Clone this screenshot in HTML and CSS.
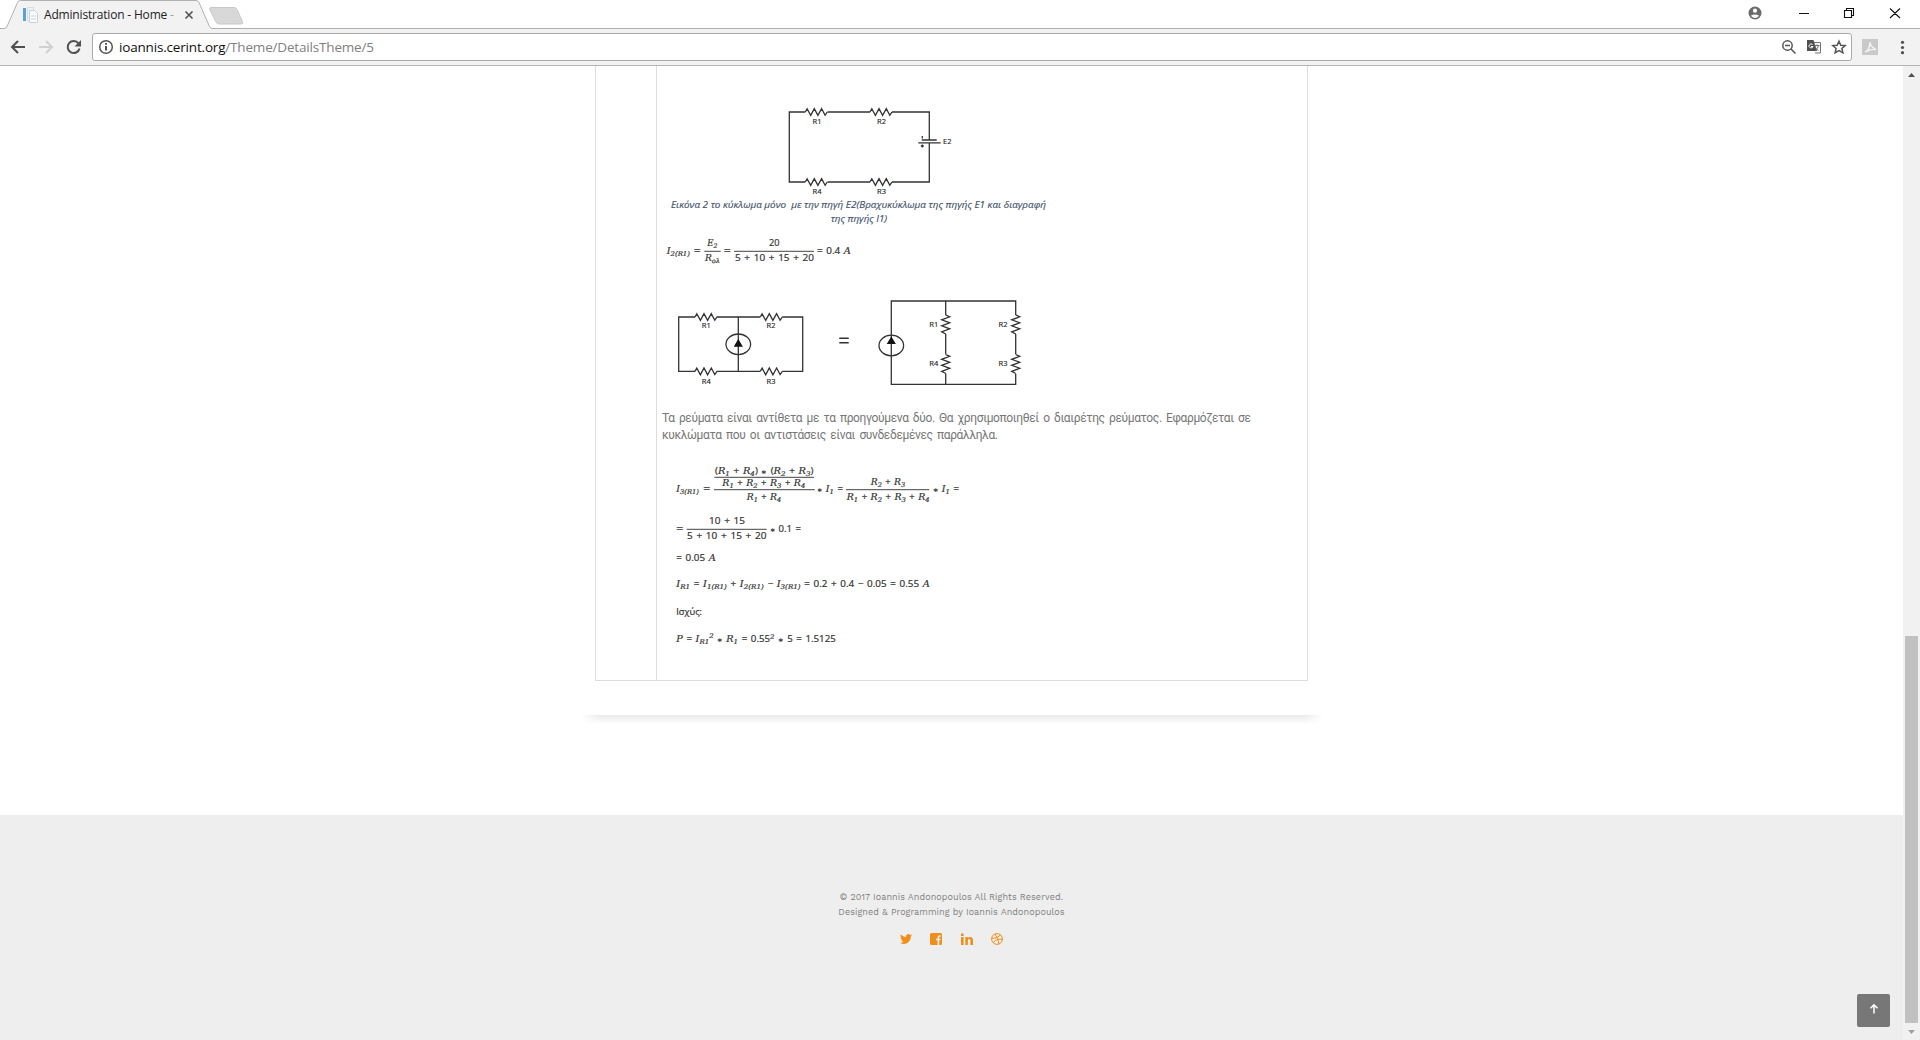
FILE: index.html
```html
<!DOCTYPE html>
<html lang="el">
<head>
<meta charset="utf-8">
<title>Administration - Home</title>
<link rel="stylesheet" href="styles.css">
</head>
<body>
<svg class="defs" width="0" height="0">
  <defs>
    <path id="res" d="M0 0l1.8-3.2 3.6 6.6 3.6-6.8 3.6 6.8 3.7-6.8 3.5 6.6 2.2-3.2"/>
    <path id="resv" d="M0 0l4 1.8-8 3 8 3-8 3 8 3-8 3 4 2.2"/>
  </defs>
</svg>
<header class="tabs">
  <svg class="tabart" width="250" height="29" viewBox="0 0 250 29">
    <path d="M0 28.5h4.500Q6 28.500 7 26.500L17.500 2.500Q18.500.5 20.500.5H196q2 0 3 2L209.500 26.500q1 2 3 2H250V29H0z" fill="#f2f2f2"/>
    <path d="M0 28.500h4.500Q6 28.500 7 26.500L17.500 2.500Q18.500.5 20.500.5H196q2 0 3 2L209.500 26.500q1 2 3 2H250" fill="none" stroke="#b0b0b0"/>
    <path d="M211 7.500h23q2 0 3 2l5.500 12q1 2.500-1.500 2.500h-22q-2 0-3-2l-6-12q-1-2.500 1-2.500z" fill="#d8d8d8" stroke="#c8c8c8"/>
    <path d="M23 8h3v13h-3z" fill="#5ba3d3"/><path d="M27.500 7.500h6v13h-6z" fill="#eef3f7" stroke="#d3dde4"/><path d="M29.500 10.500h5l3 3v9h-8z" fill="#f8fafb" stroke="#c8d2da"/><path d="M31 16h5M31 19h5" stroke="#cbd5dc"/>
    <path d="M185.500 11.500l7 7m0-7l-7 7" stroke="#555" stroke-width="1.700"/>
  </svg>
  <span class="tabtitle">Administration - Home <i>-</i></span>
  <svg class="winbtns" width="175" height="28" viewBox="1745 0 175 28">
    <circle cx="1755" cy="13" r="6.500" fill="#6a6a6a"/><circle cx="1755" cy="10.700" r="2.100" fill="#fff"/><path d="M1750.800 15.800q4.200-2.800 8.400 0-4.200 4.400-8.400 0" fill="#fff"/>
    <path d="M1799 13.500h10M1844.500 10.500h7v7h-7zM1846.500 10.500v-2h7v7h-2M1890 8.500l10 9.500m0-9.500l-10 9.500" fill="none" stroke="#111" stroke-width="1.100"/>
  </svg>
</header>
<nav class="toolbar">
  <svg class="navicons" width="92" height="36" viewBox="0 29 92 36">
    <path d="M25 47H12.500m5.500-6l-6 6 6 6" fill="none" stroke="#505050" stroke-width="2"/>
    <path d="M39 47h12.500m-5.500-6l6 6-6 6" fill="none" stroke="#d0d0d0" stroke-width="2"/>
    <path d="M78.500 43.500a6 6 0 1 0 1 5" fill="none" stroke="#505050" stroke-width="2"/><path d="M81 40v6.500h-6.500z" fill="#505050"/>
  </svg>
  <div class="omnibox">
    <svg width="22" height="26" viewBox="95 34 22 26"><circle cx="106" cy="47" r="6.300" fill="none" stroke="#555" stroke-width="1.500"/><path d="M106 46v4.500M106 43v1.700" stroke="#444" stroke-width="1.800"/></svg>
    <span class="url">ioannis.cerint.org<i>/Theme/DetailsTheme/5</i></span>
    <svg class="boxicons" width="75" height="26" viewBox="1775 34 75 26">
      <g fill="none" stroke="#555" stroke-width="1.500"><circle cx="1786.500" cy="45.500" r="4.700"/><path d="M1790 49l4.500 4.500M1784 45.500h5"/><path d="M1838 41.200l1.800 4 4.400.4-3.300 2.900 1 4.300-3.900-2.300-3.900 2.300 1-4.300-3.300-2.900 4.400-.4z"/></g>
      <path d="M1811 42.500h8.500v10.500h-5.500" fill="#f7f7f7" stroke="#777"/><path d="M1806 40h6.500l3.500 11h-10z" fill="#505050"/><path d="M1811.500 44.500a2 2 0 1 0 .5 2h-2" fill="none" stroke="#fff"/><path d="M1813.500 45.500h5m-2.500-1v1m1.500 0q-.5 3-3 4.500m-.5-3q1 2 3.500 3.500" fill="none" stroke="#666" stroke-width=".9"/>
    </svg>
  </div>
  <svg class="menuicons" width="68" height="36" viewBox="1852 29 68 36">
    <path d="M1862 39h16v16h-16z" fill="#c9c9c9"/><path d="M1865 52c3.500-1.500 5-5.500 5-10q0 4.500 6 7.500-5-1-11 2.500" fill="none" stroke="#f5f5f5" stroke-width="1.300"/>
    <g fill="#505050"><circle cx="1902.500" cy="42.300" r="1.600"/><circle cx="1902.500" cy="47.500" r="1.600"/><circle cx="1902.500" cy="52.700" r="1.600"/></g>
  </svg>
</nav>
<div class="view">
  <div class="page">
    <main>
      <div class="table">
        <div class="side"></div>
        <div class="cell">
          <svg class="fig" width="650" height="219" viewBox="657 66 650 219">
            <g class="wire">
              <path d="M805.300 112h-16v70h16M827.500 112H870M892 112h37.300v28M929.300 143v39H892M870 182h-42.500"/>
              <use href="#res" x="805.300" y="112"/><use href="#res" x="870" y="112"/><use href="#res" x="805.300" y="182"/><use href="#res" x="870" y="182"/>
              <path d="M921.700 140h15M918.300 142.800h22.400M922.300 136v2.500M920.800 146h3M922.300 144.500v3"/>
            </g>
            <g class="lab"><text x="812.500" y="124">R1</text><text x="877" y="124">R2</text><text x="812.500" y="194">R4</text><text x="877" y="194">R3</text><text x="943" y="144">E2</text></g>
            <g class="cap"><text x="671" y="208" textLength="375" lengthAdjust="spacingAndGlyphs" xml:space="preserve">Εικόνα 2 το κύκλωμα μόνο  με την πηγή Ε2(Βραχυκύκλωμα της πηγής Ε1 και διαγραφή</text><text x="830.700" y="221.500" textLength="56.500" lengthAdjust="spacingAndGlyphs">της πηγής Ι1)</text></g>
            <g class="math">
              <text x="666.700" y="253.700" textLength="23.300" lengthAdjust="spacingAndGlyphs"><tspan class="v">I</tspan><tspan class="s" dy="2">2(R1)</tspan></text>
              <text x="693.800" y="253.700" textLength="7" lengthAdjust="spacingAndGlyphs">=</text>
              <text x="707.300" y="246" textLength="10" lengthAdjust="spacingAndGlyphs"><tspan class="v">E</tspan><tspan class="s" dy="2">2</tspan></text>
              <text x="705" y="260.500" textLength="15" lengthAdjust="spacingAndGlyphs"><tspan class="v">R</tspan><tspan class="s" dy="2">ολ</tspan></text>
              <text x="723.800" y="253.700" textLength="7" lengthAdjust="spacingAndGlyphs">=</text>
              <text x="769" y="246" textLength="10.500" lengthAdjust="spacingAndGlyphs">20</text>
              <text x="735" y="260.700" textLength="79" lengthAdjust="spacingAndGlyphs">5 + 10 + 15 + 20</text>
              <text x="817" y="253.700" textLength="34" lengthAdjust="spacingAndGlyphs">= 0.4 <tspan class="v">A</tspan></text>
              <path d="M704.300 251.300h16.400M734 251.300h80"/>
            </g>
          </svg>
          <svg class="fig" width="650" height="125" viewBox="657 285 650 125">
            <g class="wire">
              <path d="M695 317h-16.300v54.400H695M716.700 317h43.600M782.300 317h20.400v54.400h-20.400M760.300 371.400h-43.600M738.300 317v54.400"/>
              <use href="#res" x="695" y="317"/><use href="#res" x="760.300" y="317"/><use href="#res" x="695" y="371.400"/><use href="#res" x="760.300" y="371.400"/>
              <ellipse cx="738.300" cy="344.300" rx="12.300" ry="10.300"/><path class="solid" d="M738.300 339l4.600 7.800h-9.200z"/>
              <path d="M1015.700 315v-14H891.300v83.400h124.400V373.700M945.700 301v14M945.700 334v20.300M945.700 373.500v10.900M1015.700 334v20.300"/>
              <use href="#resv" x="945.700" y="315"/><use href="#resv" x="945.700" y="354.500"/><use href="#resv" x="1015.700" y="315"/><use href="#resv" x="1015.700" y="354.500"/>
              <ellipse cx="891.300" cy="345.500" rx="12.300" ry="10.300"/><path class="solid" d="M891.300 336.500l4.600 7.600h-9.200z"/>
              <path class="eq" d="M839.300 338.300h9.400M839.300 342.700h9.400"/>
            </g>
            <g class="lab"><text x="701.800" y="328.300">R1</text><text x="766.500" y="328.300">R2</text><text x="701.800" y="383.500">R4</text><text x="766.500" y="383.500">R3</text><text x="929.300" y="326.700">R1</text><text x="929.300" y="366.300">R4</text><text x="998.500" y="326.700">R2</text><text x="998.500" y="366.300">R3</text></g>
          </svg>
          <p>Τα ρεύματα είναι αντίθετα με τα προηγούμενα δύο. Θα χρησιμοποιηθεί ο διαιρέτης ρεύματος. Εφαρμόζεται σε<br>κυκλώματα που οι αντιστάσεις είναι συνδεδεμένες παράλληλα.</p>
          <svg class="fig" width="650" height="236" viewBox="657 444 650 236">
            <g class="math">
              <text x="676.300" y="492.300" textLength="22.700" lengthAdjust="spacingAndGlyphs"><tspan class="v">I</tspan><tspan class="s" dy="2">3(R1)</tspan></text>
              <text x="703.300" y="492.300" textLength="7" lengthAdjust="spacingAndGlyphs">=</text>
              <text x="715" y="474.300" textLength="98.500" lengthAdjust="spacingAndGlyphs">(<tspan class="v">R</tspan><tspan class="s" dy="2">1</tspan><tspan dy="-2"> + </tspan><tspan class="v">R</tspan><tspan class="s" dy="2">4</tspan><tspan dy="-2">) </tspan><tspan class="o">∗</tspan> (<tspan class="v">R</tspan><tspan class="s" dy="2">2</tspan><tspan dy="-2"> + </tspan><tspan class="v">R</tspan><tspan class="s" dy="2">3</tspan><tspan dy="-2">)</tspan></text>
              <text x="722.300" y="485.700" textLength="83" lengthAdjust="spacingAndGlyphs"><tspan class="v">R</tspan><tspan class="s" dy="2">1</tspan><tspan dy="-2"> + </tspan><tspan class="v">R</tspan><tspan class="s" dy="2">2</tspan><tspan dy="-2"> + </tspan><tspan class="v">R</tspan><tspan class="s" dy="2">3</tspan><tspan dy="-2"> + </tspan><tspan class="v">R</tspan><tspan class="s" dy="2">4</tspan></text>
              <text x="746.700" y="500" textLength="34.500" lengthAdjust="spacingAndGlyphs"><tspan class="v">R</tspan><tspan class="s" dy="2">1</tspan><tspan dy="-2"> + </tspan><tspan class="v">R</tspan><tspan class="s" dy="2">4</tspan></text>
              <text x="817" y="492.300" textLength="26" lengthAdjust="spacingAndGlyphs"><tspan class="o">∗</tspan> <tspan class="v">I</tspan><tspan class="s" dy="2">1</tspan><tspan dy="-2"> =</tspan></text>
              <text x="870.700" y="485" textLength="34.500" lengthAdjust="spacingAndGlyphs"><tspan class="v">R</tspan><tspan class="s" dy="2">2</tspan><tspan dy="-2"> + </tspan><tspan class="v">R</tspan><tspan class="s" dy="2">3</tspan></text>
              <text x="846.700" y="500" textLength="83" lengthAdjust="spacingAndGlyphs"><tspan class="v">R</tspan><tspan class="s" dy="2">1</tspan><tspan dy="-2"> + </tspan><tspan class="v">R</tspan><tspan class="s" dy="2">2</tspan><tspan dy="-2"> + </tspan><tspan class="v">R</tspan><tspan class="s" dy="2">3</tspan><tspan dy="-2"> + </tspan><tspan class="v">R</tspan><tspan class="s" dy="2">4</tspan></text>
              <text x="933" y="492.300" textLength="26" lengthAdjust="spacingAndGlyphs"><tspan class="o">∗</tspan> <tspan class="v">I</tspan><tspan class="s" dy="2">1</tspan><tspan dy="-2"> =</tspan></text>
              <text x="676.300" y="531.700" textLength="7" lengthAdjust="spacingAndGlyphs">=</text>
              <text x="709" y="524" textLength="36" lengthAdjust="spacingAndGlyphs">10 + 15</text>
              <text x="687" y="538.700" textLength="79.500" lengthAdjust="spacingAndGlyphs">5 + 10 + 15 + 20</text>
              <text x="769.800" y="531.700" textLength="31.200" lengthAdjust="spacingAndGlyphs"><tspan class="o">∗</tspan> 0.1 =</text>
              <text x="676.300" y="561.400" textLength="39.500" lengthAdjust="spacingAndGlyphs">= 0.05 <tspan class="v">A</tspan></text>
              <text x="676.300" y="587.400" textLength="253.500" lengthAdjust="spacingAndGlyphs"><tspan class="v">I</tspan><tspan class="s" dy="2">R1</tspan><tspan dy="-2"> = </tspan><tspan class="v">I</tspan><tspan class="s" dy="2">1(R1)</tspan><tspan dy="-2"> + </tspan><tspan class="v">I</tspan><tspan class="s" dy="2">2(R1)</tspan><tspan dy="-2"> − </tspan><tspan class="v">I</tspan><tspan class="s" dy="2">3(R1)</tspan><tspan dy="-2"> = 0.2 + 0.4 − 0.05 = 0.55 </tspan><tspan class="v">A</tspan></text>
              <text x="676.300" y="614.700" textLength="25.700" lengthAdjust="spacingAndGlyphs">Ισχύς:</text>
              <text x="676.300" y="641.500" textLength="159.500" lengthAdjust="spacingAndGlyphs"><tspan class="v">P</tspan> = <tspan class="v">I</tspan><tspan class="s" dy="2">R1</tspan><tspan class="s" dy="-6">2</tspan><tspan dy="4"> </tspan><tspan class="o">∗</tspan> <tspan class="v">R</tspan><tspan class="s" dy="2">1</tspan><tspan dy="-2"> = 0.55</tspan><tspan class="s" dy="-3">2</tspan><tspan dy="3"> </tspan><tspan class="o">∗</tspan> 5 = 1.5125</text>
              <path d="M714.500 477.300h99.500M714 489.700h100.700M846 489.700h83.300M686.700 529.300h80"/>
            </g>
          </svg>
        </div>
      </div>
      <div class="shade"></div>
    </main>
    <footer>
      <div class="copy">© 2017 Ioannis Andonopoulos All Rights Reserved.</div>
      <div class="copy">Designed &amp; Programming by Ioannis Andonopoulos</div>
      <div class="social">
        <svg width="12" height="12" viewBox="0 0 24 24"><path fill="#ee8f1c" d="M24 4.600a10 10 0 0 1-2.800.8 5 5 0 0 0 2.100-2.700 10 10 0 0 1-3.100 1.200 4.900 4.900 0 0 0-8.400 4.500A14 14 0 0 1 1.700 3.200a4.900 4.900 0 0 0 1.500 6.500 5 5 0 0 1-2.200-.6 4.900 4.900 0 0 0 4 4.900 5 5 0 0 1-2.300.1 4.900 4.900 0 0 0 4.600 3.400A10 10 0 0 1 0 19.500a14 14 0 0 0 21.500-12.400A10 10 0 0 0 24 4.600z"/></svg>
        <svg width="12" height="12" viewBox="0 0 12 12"><rect width="12" height="12" rx="1.500" fill="#ee8f1c"/><path d="M10.700 3H9.500Q8.400 3 8.400 4.200V12M6 6.500h4.500" fill="none" stroke="#eee" stroke-width="1.700"/></svg>
        <svg width="12" height="12" viewBox="0 0 12 12"><path fill="#ee8f1c" d="M0 4h2.600v8H0zM0 .5h2.600V3H0zM4.300 4h2.500v1.100C8 3.300 12 3.200 12 7v5H9.400V7.500C9.400 5.300 6.900 5.500 6.900 7.500V12H4.300z"/></svg>
        <svg width="12" height="12" viewBox="0 0 12 12"><g fill="none" stroke="#ee8f1c"><circle cx="6" cy="6" r="5.400"/><path d="M4 1q3.500 4.500 4 10M.6 5.500Q7 5.500 9.500 2M2.300 9.800Q5 5 11.400 6.500"/></g></svg>
      </div>
    </footer>
    <a class="top"><svg width="10" height="12" viewBox="0 0 10 12"><path d="M5 10.500V2M1.500 5.300L5 1.900l3.500 3.400" fill="none" stroke="#fff" stroke-width="1.500"/></svg></a>
  </div>
  <aside class="scroll">
    <svg width="17" height="17"><path d="M5 11l3.500-4 3.500 4z" fill="#505050"/></svg>
    <div class="thumb"></div>
    <svg width="17" height="17"><path d="M5 7l3.500 4L12 7z" fill="#a0a0a0"/></svg>
  </aside>
</div>
</body>
</html>
```
FILE: styles.css
```css
* { box-sizing: border-box; }
body { margin: 0; width: 1920px; height: 1040px; overflow: hidden; background: #fff; font-family: "Open Sans", sans-serif; display: flex; flex-direction: column; }
svg { display: block; flex: none; }
i { font-style: normal; }
.defs { position: absolute; }
.tabs { position: relative; height: 29px; flex: none; display: flex; border-bottom: 1px solid #b0b0b0; }
.tabart { position: relative; }
.tabtitle { position: absolute; left: 44px; top: 7px; font-size: 12px; line-height: 16px; color: #222; white-space: nowrap; letter-spacing: -0.18px; }
.tabtitle i { color: #999; }
.winbtns { margin-left: auto; }
.toolbar { height: 37px; flex: none; display: flex; background: #f2f2f2; border-bottom: 1px solid #b6b6b6; }
.omnibox { width: 1760px; height: 28px; margin-top: 4px; border: 1px solid #a9a9a9; border-radius: 3px; background: #fff; display: flex; align-items: center; padding-left: 2px; }
.url { font-size: 13.5px; line-height: 24px; margin-left: 2px; color: #111; letter-spacing: -0.18px; }
.url i { color: #808080; }
.boxicons { margin-left: auto; }
.view { height: 974px; flex: none; display: flex; }
.page { position: relative; width: 1903px; }
main { height: 749px; padding-left: 580px; }
.table { width: 713px; height: 615px; margin-left: 15px; display: flex; border: 1px solid #ddd; border-top: 0; }
.side { width: 61px; border-right: 1px solid #ddd; }
.cell { width: 650px; }
.cell p { margin: 0; padding-left: 5px; height: 34px; font: 12px/17px Roboto, sans-serif; color: #777; white-space: nowrap; letter-spacing: -0.37px; word-spacing: 1.7px; }
.shade { width: 744px; height: 9px; margin-top: 34px; background: linear-gradient(#e9e9e9, #fff); mask-image: linear-gradient(90deg, transparent, #000 20px, #000 724px, transparent); }
.wire { fill: none; stroke: #333; stroke-width: 1.3; }
.wire .solid { fill: #111; stroke: none; }
.wire .eq { stroke-width: 1.4; }
.lab { font: 7.5px "Open Sans", sans-serif; fill: #222; stroke: #222; stroke-width: 0.15; }
.cap { font: italic 9px "Open Sans", sans-serif; fill: #44546a; stroke: #44546a; stroke-width: 0.15; }
.math { font: 9px "Open Sans", sans-serif; fill: #333; }
.math text { white-space: pre; word-spacing: 1px; stroke: #333; stroke-width: 0.2; }
.math path { stroke: #444; stroke-width: 1; }
.v { font: italic 9px "DejaVu Serif", serif; }
.s { font: italic 6.5px "DejaVu Serif", serif; }
.o { font-size: 6px; }
footer { height: 225px; background: #eee; padding-top: 75px; color: #808080; font: 9px/15px "Work Sans", Inter, sans-serif; }
.copy { text-align: center; letter-spacing: 0.08px; }
.social { display: flex; justify-content: center; gap: 18.3px; margin-top: 13px; }
.top { position: absolute; left: 1857px; top: 928px; width: 33px; height: 33px; border-radius: 2px; background: #777; display: flex; align-items: center; justify-content: center; padding-bottom: 3px; }
.scroll { width: 17px; background: #f1f1f1; display: flex; flex-direction: column; justify-content: space-between; }
.thumb { width: 13px; height: 387px; margin: 553px 0 0 2px; background: #c1c1c1; }
```
